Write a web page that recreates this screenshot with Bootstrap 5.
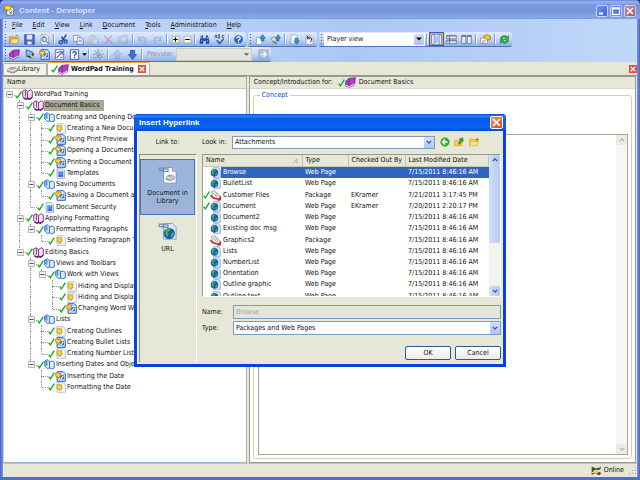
<!DOCTYPE html>
<html lang="en">
<head>
<meta charset="utf-8">
<meta name="viewport" content="width=device-width, initial-scale=1">
<title>Content - Developer</title>
<link rel="stylesheet" href="https://cdn.jsdelivr.net/npm/bootstrap@5.3.0/dist/css/bootstrap.min.css">
<style>
:root{--face:#e7e7d8;--line:#a5a693;--edge:#7f9db9}
html,body{height:100%}
body{font:7px/11px "DejaVu Sans Condensed","DejaVu Sans",sans-serif;color:#111;background:#12399a;overflow:hidden}
button,select,input,fieldset,legend{font:inherit;line-height:11px;color:inherit}
button{background:none;border:0;padding:0}
svg{display:block;flex:none}
.ic{width:11px;height:11px}
.frame{height:100vh;background:linear-gradient(90deg,#4a62cc,#7c96e4 3px,#7c96e4 calc(100% - 3px),#4a62cc);border-radius:5px 5px 0 0;padding:0 3px 3px;position:relative;box-shadow:inset 0 -3px 0 #4a6fcc}
.titlebar{height:19px;margin:0 -3px;padding:2px 4px 0;border-radius:5px 5px 0 0;background:linear-gradient(#6c88d6,#94b2f0 2px,#7a94dd 5px,#7a96de 12px,#86a8e8 17px,#7a98dc)}
.caption-text{font:700 8px/11px "Liberation Sans",sans-serif;color:#dbe5fb}
.winbtn{width:12px;height:12px;border:1px solid #c3d2f5;border-radius:2px;background:linear-gradient(135deg,#6f93f0,#3a62dc);margin-left:2px}
.winbtn.shut{background:linear-gradient(135deg,#cf8c94,#a65468)}
.bars{background:linear-gradient(90deg,#c9d9f8,#abc8f5 55%,#b3cbf7 70%,#bfd8f8)}
.menus{height:13px}
.menus a{color:#111;text-decoration:none;padding:0 5px;line-height:12px}
.menus .grip{margin-right:0}
.toolrow{gap:2px}
.grip{width:3px;flex:none;margin:2px 1px;background:repeating-linear-gradient(#3c5c9c 0 1px,transparent 1px 3px) 1px 0/1px 100% no-repeat}
.band{height:15px;border-radius:2px;background:linear-gradient(#dfeafc,#c5d8f7 50%,#8db0e8);border-bottom:1px solid #4b74b8;align-items:center}
.band .grip{align-self:stretch}
.tool{width:15px;height:14px;display:flex;align-items:center;justify-content:center;flex:none}
.tool.slim{width:12px}
.tool.lit{background:#f7a55c;border:1px solid #3a5cae}
.tool.off{opacity:.4}
.rule{width:4px;flex:none;align-self:stretch;margin:2px 0;background:linear-gradient(#7f9fd6,#7f9fd6) 1px 0/1px 100% no-repeat,linear-gradient(#f0f6ff,#f0f6ff) 2px 0/1px 100% no-repeat}
.pvlabel{color:#8c94a4;padding:0 3px}
.combo{display:flex;align-items:stretch;background:#fff;border:1px solid var(--edge);height:13px}
.combo.tall{height:14px}
.combo select{appearance:none;border:0;background:transparent;padding:0 2px;flex:1;min-width:0;outline:0}
.drop{width:10px;display:flex;align-items:center;justify-content:center;background:linear-gradient(#d3e0fd,#adc3f7);border-radius:1px}
.combo.player{width:101px;border-color:#fff;height:13px}
.combo.quiet{width:76px;background:#e3e5dc;border-color:#c9cdb9}
.combo.quiet .drop{background:none}
.tabs{height:14px;background:var(--face);border-bottom:1px solid #8d9a9a;align-items:flex-end}
.sheet{height:12px;padding:0 6px 0 3px;background:#f3f3ec;border:1px solid #b4b4a4;border-bottom:0;border-radius:2px 2px 0 0}
.sheet.on{height:13px;background:#fff;border-top:1px solid #ef9a32;font-weight:700;padding:0 3px}
.sheet.on .kind{margin-right:2px}
.redx{width:8px;height:8px;background:#e2512c;display:flex;align-items:center;justify-content:center}
.tabs>.redx{margin-bottom:2px}
.work{background:var(--face);min-height:0;padding-right:1px}
.outline{flex:0 0 38.5%;background:#fff;border:1px solid #9ab0c4;border-top-color:#9a9b8c;border-left-color:#c8d0dc;min-width:0;overflow:hidden}
.colhead{height:12px;background:var(--face);border-bottom:1px solid #c9c7b8;padding-left:3px}
.tree{display:grid;grid-auto-rows:1fr;height:304px;list-style:none;margin:0;padding:0}
.node{display:flex;align-items:center;white-space:nowrap;min-height:0}
.guide{width:11px;align-self:stretch;flex:none;display:grid;grid-template:1fr 1fr/5px 6px}
.up,.down{border-right:1px dotted #999}
.down{grid-row:2;grid-column:1}
.up{grid-row:1;grid-column:1}
.arm{grid-row:2;grid-column:2;border-top:1px dotted #999}
.guide svg{grid-area:1/1/3/3;place-self:center;width:7px;height:7px}
.tick{width:7px;height:8px;flex:none}
.kind{width:11px;height:11px}
.node .name{padding:0 4px 0 1px}
.node.sel .name{background:#a9a894}
.detail{background:#fff;border:1px solid #9a9b8c;min-width:0;margin-left:2px}
.detail .strip{height:12px;background:var(--face);padding-left:4px;border-bottom:1px solid #d8d8c8}
.strip .tick{margin-left:5px}
.strip .kind{margin-right:3px}
.group{border:1px solid #d0d0bf;border-radius:3px;margin:1px 3px 3px;padding:0 3px 3px 4px;min-height:0;flex:1;display:flex;flex-direction:column;min-width:0}
.group legend{float:none;width:auto;color:#1048d0;margin:0 0 0 2px;padding:0 2px;line-height:10px}
.notes{flex:1;border:1px solid var(--line);margin-top:34px;display:flex;min-height:0}
.notes textarea{flex:1;border:0;resize:none;outline:0;min-width:0}
.pale{width:11px;background:#f6f6f4}
.knob{height:10px;display:flex;align-items:center;justify-content:center;background:linear-gradient(90deg,#d3e0fd,#adc3f7);border-radius:2px}
.pale .knob{background:#ebebe2}
.status{height:14px;background:var(--face);border-top:1px solid #c4c4b4}
.status svg:first-child{margin-right:2px}
/* dialog window */
.dlg{position:absolute;left:134px;top:114px;width:372px;background:var(--face);border:solid #0a3fe0;border-width:0 3px 3px;border-radius:4px 4px 0 0;box-shadow:inset 1px 0 0 #fff}
.dlg-title{height:17px;margin:0 -3px;padding:0 3px 0 5px;border-radius:4px 4px 0 0;background:linear-gradient(#0a3fd0,#2c86fb 2px,#0458ea 5px,#0564f8 13px,#0448d0);color:#fff}
.dlg-title .caption-text{color:#fff}
.dlg-title .shut{width:13px;height:13px;border:1px solid #fff;border-radius:2px;background:linear-gradient(135deg,#f0957c,#d8401c);display:flex;align-items:center;justify-content:center}
.lookrow{height:22px}
.linkto{width:61px;text-align:center}
.lookrow label{width:34px;padding-left:4px}
.lookrow .combo{width:203px}
.side{width:58px;border:1px solid #8e8d7c;border-right-color:#fff;border-bottom:0;margin:1px 0 2px 2px;padding:4px 1px 0 0}
.place{display:flex;flex-direction:column;align-items:center;justify-content:flex-start;width:100%;line-height:8px;border:1px solid transparent;text-align:center;padding-top:5px}
.place.on{background:#9db4da;border-color:#4a72b8;height:56px}
.place svg{width:20px;height:20px;margin-bottom:4px}
.pane{flex:1;min-width:0;padding:1px 2px 0 5px}
.listbox{height:143px;border:1px solid #8e9a94;border-right-color:#fff;border-bottom-color:#fff;background:#fff;display:flex;overflow:hidden}
.files{height:147px;table-layout:fixed;width:100%;border-collapse:collapse;margin:0;white-space:nowrap}
.c-name{width:99px}.c-type{width:46px}.c-by{width:57px}
.files th{font-weight:400;background:var(--face);padding:0 3px;height:11px;border-right:1px solid #c6c5b5;border-bottom:1px solid #c9c7b8}
.files td{padding:0 3px;overflow:hidden}
.files td:first-child{padding:0}
.files tr.sel td+td,.files tr.sel .name{background:#3066c0;color:#fff}
.files .name{flex:1;padding-left:2px}
.track{width:11px;background:#f3f3ef;flex:none}
.thumb{height:78px;background:linear-gradient(90deg,#d0dffc,#b3c9f8);border-radius:2px}
.fieldrow{display:grid;grid-template-columns:31px 1fr;align-items:center;margin-top:2px}
.listbox+.fieldrow{margin-top:8px}
.fieldrow input{border:1px solid var(--edge);background:#e5e6d9;color:#a5a593;height:14px;padding:0 2px;min-width:0;border-radius:0}
.actions{margin:11px 0 4px;gap:4px}
.push{width:46px;height:14px;border:1px solid #2c5a92;border-radius:2px;background:linear-gradient(#fff,#ecebe3)}
</style>
<script src="https://cdn.jsdelivr.net/npm/bootstrap@5.3.0/dist/js/bootstrap.bundle.min.js"></script>
</head>
<body>
<svg width="0" height="0" class="position-absolute" aria-hidden="true">
<symbol id="tick" viewBox="0 0 12 14"><path d="M1 8l3 4L11 1" fill="none" stroke="#12b01c" stroke-width="2.4"/></symbol>
<symbol id="pbook" viewBox="0 0 16 16"><path d="M1 3l4-2 3 3 4-3 3 2v9l-4 2-3-1-3 1-4-3z" fill="#f6e4f6" stroke="#8a2a8a" stroke-width="1.4"/><path d="M8 4v9M5 2v9" stroke="#8a2a8a" stroke-width="1.4"/><path d="M2 13l4 2 2-1 3 1 4-3" fill="none" stroke="#5a105a" stroke-width="1.6"/></symbol>
<symbol id="bbook" viewBox="0 0 16 16"><path d="M1 3l4-2 3 3 4-1 3 2v8l-4 1-3-1-3 1-4-4z" fill="#dcecfc" stroke="#2c6ad0" stroke-width="1.4"/><path d="M8 4v9" stroke="#2c6ad0" stroke-width="1.4"/><path d="M2 3l3-1v8l-3-1z" fill="#4a90e8"/></symbol>
<symbol id="vbook" viewBox="0 0 16 16"><path d="M1 6l5-4 9-1-1 10-8 4-5-2z" fill="#b040c8" stroke="#5a1470"/><path d="M1 12l5 2 8-4" fill="none" stroke="#fff" stroke-width="1.3"/><path d="M6 2v11" stroke="#6c1888"/></symbol>
<symbol id="qpage" viewBox="0 0 16 16"><path d="M3 1h9l3 3v11H3z" fill="#f4f8ff" stroke="#8ca4d0"/><path d="M3 4h7v6H8l-1 3-2-3H3z" fill="#ffd23a" stroke="#b88410"/></symbol>
<symbol id="bqpage" viewBox="0 0 16 16"><path d="M3 1h9l3 3v11H3z" fill="#cfe0fb" stroke="#2858c0" stroke-width="1.4"/><path d="M7 6h6v6H7z" fill="#3a6ad8"/><path d="M8 12l4-5" stroke="#fff" stroke-width="1.5"/><path d="M1 3h7v5H6l-1 3-2-3H1z" fill="#ffd23a" stroke="#a87810"/></symbol>
<symbol id="dpage" viewBox="0 0 16 16"><path d="M3 1h8l3 3v11H3z" fill="#eaf1ff" stroke="#6f8cc8"/><path d="M5 5h7v8H5z" fill="#3a66e0"/><path d="M6 7h5M6 9h5" stroke="#a8c0f8"/></symbol>
<symbol id="web" viewBox="0 0 16 16"><path d="M5 1h8l2 3v11H5z" fill="#d6e6fb" stroke="#7a98c8"/><circle cx="6.500" cy="8.500" r="5.500" fill="#1c56b8"/><path d="M2 7c1-3 3-4 5-3l1 2-3 1 1 3-2 2zM8 9l3-1-1 4-2 1z" fill="#3cb04a"/></symbol>
<symbol id="pkg" viewBox="0 0 16 16"><path d="M2 2l5-1 8 8-3 4-8-3z" fill="#f2f2f2" stroke="#888"/><path d="M4 4l6 6M7 3l5 6" stroke="#888"/><path d="M1 7c1 4 5 6 13 6M15 9v5l-4 1" fill="none" stroke="#e02020" stroke-width="2.200"/></symbol>
<symbol id="exp" viewBox="0 0 9 9"><rect x=".5" y=".5" width="8" height="8" rx="1" fill="#f4f4ee" stroke="#8c98a8"/><path d="M2 4.500h5" stroke="#222"/></symbol>
<symbol id="cx" viewBox="0 0 8 8"><path d="M1 1l6 6M7 1L1 7" stroke="#fff" stroke-width="1.700"/></symbol>
<symbol id="chev" viewBox="0 0 8 8"><path d="M1 2.500l3 3 3-3" fill="none" stroke="#3c5690" stroke-width="1.800"/></symbol>
<symbol id="chevup" viewBox="0 0 8 8"><path d="M1 5.500l3-3 3 3" fill="none" stroke="#3c5690" stroke-width="1.800"/></symbol>
<symbol id="gchev" viewBox="0 0 8 8"><path d="M1 2.500l3 3 3-3" fill="none" stroke="#b4b4a8" stroke-width="1.800"/></symbol>
<symbol id="gchevup" viewBox="0 0 8 8"><path d="M1 5.500l3-3 3 3" fill="none" stroke="#b4b4a8" stroke-width="1.800"/></symbol>
<symbol id="tri" viewBox="0 0 8 8"><path d="M0 2h8L4 6z"/></symbol>
<symbol id="app" viewBox="0 0 16 16"><path d="M4 3h10v12H4z" fill="#f4f4f4" stroke="#555"/><path d="M1 1h9v6H6L4 9V7H1z" fill="#ffd83a" stroke="#8a7410"/><path d="M7 9l5 4M12 8l-4 6" stroke="#444"/></symbol>
<symbol id="open" viewBox="0 0 16 16"><path d="M1 4h5l1 1h5v3H4l-3 6z" fill="#f0c040" stroke="#a87818"/><path d="M4 7h11l-3 7H1z" fill="#ffdf7a" stroke="#b88820"/><path d="M9 3c2-2 4-1 5 1" stroke="#555" fill="none"/></symbol>
<symbol id="save" viewBox="0 0 16 16"><path d="M1 1h14v14H1z" fill="#4a68c8" stroke="#2c4494"/><path d="M4 1h8v7H4z" fill="#dfe8fb"/><path d="M5 11h6v4H5z" fill="#f4f4f4"/></symbol>
<symbol id="prev" viewBox="0 0 16 16"><path d="M3 1h8l3 3v11H3z" fill="#f6f8fc" stroke="#8090ac"/><circle cx="8" cy="8" r="3.500" fill="#bcd4f0" stroke="#607090" stroke-width="1.300"/><path d="M11 11l3 3M5 4h4" stroke="#607090" stroke-width="1.500"/></symbol>
<symbol id="cut" viewBox="0 0 16 16"><path d="M12 1L6 10M10 10L5 4" stroke="#24408c" stroke-width="2"/><circle cx="4" cy="12" r="2.300" fill="none" stroke="#2850b8" stroke-width="2"/><circle cx="11" cy="11" r="2.300" fill="none" stroke="#2850b8" stroke-width="2"/></symbol>
<symbol id="copy" viewBox="0 0 16 16"><path d="M1 2h7l2 2v7H1z" fill="#fff" stroke="#4a6cb8"/><path d="M6 5h6l3 3v7H6z" fill="#e6eefc" stroke="#4a6cb8"/><path d="M8 9h5M8 11h5" stroke="#6c8cd0"/></symbol>
<symbol id="paste" viewBox="0 0 16 16"><path d="M2 3h9v11H2z" fill="#c8c8c0" stroke="#888"/><path d="M5 1h3v3H5z" fill="#999"/><path d="M7 7h7v8H7z" fill="#eee" stroke="#888"/></symbol>
<symbol id="del" viewBox="0 0 16 16"><path d="M2 3l12 11M13 2L3 14" stroke="#c04878" stroke-width="1.800"/></symbol>
<symbol id="cam" viewBox="0 0 16 16"><path d="M1 4h4l1-2h8v11H1z" fill="#b4c8e8" stroke="#607cb0"/><circle cx="8" cy="8" r="3.500" fill="#e8f0fb" stroke="#607cb0"/></symbol>
<symbol id="undo" viewBox="0 0 16 16"><path d="M3 3v6h6M3 8c3-5 10-4 10 1 0 2-1 3-3 4" fill="none" stroke="#6080c0" stroke-width="1.800"/></symbol>
<symbol id="redo" viewBox="0 0 16 16"><path d="M13 3v6H7M13 8C10 3 3 4 3 9c0 2 1 3 3 4" fill="none" stroke="#6080c0" stroke-width="1.800"/></symbol>
<symbol id="plus" viewBox="0 0 16 16"><path d="M2 2h12v12H2z" fill="#fffef4" stroke="#888870"/><path d="M8 4v8M4 8h8" stroke="#000" stroke-width="2"/></symbol>
<symbol id="minus" viewBox="0 0 16 16"><path d="M2 2h12v12H2z" fill="#fffef4" stroke="#888870"/><path d="M4 8h8" stroke="#000" stroke-width="2"/></symbol>
<symbol id="find" viewBox="0 0 16 16"><path d="M3 2h3v4h4V2h3l2 8v4h-5v-4H6v4H1v-4z" fill="#24489c"/><path d="M3 10h2M11 10h2M4 4v3M12 4v3" stroke="#a8c4f4" stroke-width="1.300"/></symbol>
<symbol id="abc" viewBox="0 0 16 16"><path d="M1 6l2-5 1 5M6 1v5h2V1H6M15 2h-3v3h3" fill="none" stroke="#444" stroke-width="1.100"/><path d="M4 9l4 5 6-7" fill="none" stroke="#2858c8" stroke-width="2.200"/></symbol>
<symbol id="help" viewBox="0 0 16 16"><circle cx="8" cy="8" r="7" fill="#2c64d0" stroke="#f0f6ff"/><path d="M5.500 6c0-3 5-3 5 0 0 2-2.500 1.500-2.500 4M8 11v2" fill="none" stroke="#fff" stroke-width="1.800"/></symbol>
<symbol id="upload" viewBox="0 0 16 16"><path d="M2 5h8v10H2z" fill="#fff" stroke="#8898b0"/><path d="M11 1l4 5h-2v4H9V6H7z" fill="#28a0c8" stroke="#186888"/></symbol>
<symbol id="upload2" viewBox="0 0 16 16"><path d="M1 6l6-2 3 5-5 3z" fill="#ddd" stroke="#777"/><path d="M4 11l6 3" stroke="#777" stroke-width="2"/><path d="M12 1l3 5h-2v4h-3V6H8z" fill="#28a0c8" stroke="#186888"/></symbol>
<symbol id="download" viewBox="0 0 16 16"><path d="M3 1h6l3 3v10H3z" fill="#fff" stroke="#8898b0"/><path d="M11 15l4-5h-2V6H9v4H7z" fill="#28a0c8" stroke="#186888"/></symbol>
<symbol id="undochk" viewBox="0 0 16 16"><path d="M3 2h7l3 3v10H3z" fill="#fff" stroke="#8898b0"/><path d="M5 6c3-3 7-1 6 3l-2 3M5 3v4h4" fill="none" stroke="#444" stroke-width="1.500"/></symbol>
<symbol id="v1" viewBox="0 0 16 16"><path d="M1 1h14v14H1z" fill="#fff" stroke="#4468b8"/><path d="M5 3h6v10H5z" fill="#a8c4f4"/><path d="M4.500 1v14M12 1v14" stroke="#4468b8"/></symbol>
<symbol id="v2" viewBox="0 0 16 16"><path d="M1 2h14v5H1zM1 9h14v5H1z" fill="#e6ecf4" stroke="#50607c"/><path d="M1 3h14M1 10h14M5 3v11" stroke="#50607c"/></symbol>
<symbol id="v3" viewBox="0 0 16 16"><path d="M1 2h6v12H1zM9 2h6v12H9z" fill="#e6ecf4" stroke="#50607c"/><path d="M1 3h6M9 3h6" stroke="#50607c" stroke-width="2"/></symbol>
<symbol id="props" viewBox="0 0 16 16"><path d="M1 6h10v8H1z" fill="#fff" stroke="#777"/><path d="M5 3l5-2 5 2v5l-5 1-3-3z" fill="#f4c440" stroke="#8a6a10"/><path d="M3 10h6M3 12h4" stroke="#777"/></symbol>
<symbol id="refresh" viewBox="0 0 16 16"><path d="M2 7c1-5 7-6 10-3l2-2v6H8l2-2C8 4 5 5 5 7zM14 9c-1 5-7 6-10 3l-2 2V8h6l-2 2c2 2 5 1 5-1z" fill="#34b830" stroke="#147018" stroke-width=".7"/></symbol>
<symbol id="topic" viewBox="0 0 16 16"><path d="M3 1l9 3v8l-9-3z" fill="#8cb4ec" stroke="#244c98"/><path d="M2 10l10 4 3-7-3-2v5z" fill="#283c70"/><path d="M8 9l6 1-2 4z" fill="#f4cc40"/></symbol>
<symbol id="linkpg" viewBox="0 0 16 16"><path d="M2 1h12v14H2z" fill="#fff" stroke="#607090" stroke-width="1.300"/><path d="M4 13l7-8M7 4h5v5M4 5h3M9 12h3" fill="none" stroke="#3c58a0" stroke-width="1.500"/></symbol>
<symbol id="qbox" viewBox="0 0 16 16"><path d="M2 1h12v14H2z" fill="#fff" stroke="#3c5090" stroke-width="1.300"/><path d="M5.500 6c0-3 5-3 5 0 0 2-2.500 1.500-2.500 4M8 11v2" fill="none" stroke="#28409c" stroke-width="1.800"/></symbol>
<symbol id="unlink" viewBox="0 0 16 16"><path d="M4 7l3-3 3 3-3 3zM7 11l3-3 3 3-3 3z" fill="none" stroke="#8a94a4" stroke-width="1.500"/><path d="M8 0v3M2 2l2 2M13 2l-2 2M0 8h3M13 7h3M3 13l2-1" stroke="#6a7484"/></symbol>
<symbol id="aup" viewBox="0 0 16 16"><path d="M8 1l6 7h-3v6H5V8H2z" fill="#8cb0ec" stroke="#4870c0"/></symbol>
<symbol id="adown" viewBox="0 0 16 16"><path d="M8 15l6-7h-3V2H5v6H2z" fill="#3474dc" stroke="#1c449c"/></symbol>
<symbol id="go" viewBox="0 0 16 16"><path d="M1 1h14v14H1z" fill="#a4b4c8" stroke="#8898b0"/><path d="M4 8h8M8 4l4 4-4 4" fill="none" stroke="#fff" stroke-width="2"/></symbol>
<symbol id="lib" viewBox="0 0 16 16"><path d="M1 8l5-3 9 1v4l-6 3-8-2z" fill="#bbb" stroke="#666"/><path d="M1 8l8 2 6-4" fill="none" stroke="#f4f4f4" stroke-width="1.400"/></symbol>
<symbol id="gplus" viewBox="0 0 16 16"><circle cx="8" cy="8" r="7" fill="#34a830" stroke="#5cb858"/><path d="M12 8H5M8 4L4 8l4 4" fill="none" stroke="#fff" stroke-width="2.200"/></symbol>
<symbol id="fup" viewBox="0 0 16 16"><path d="M1 5h5l1 1h6v8H1z" fill="#f8d050" stroke="#d0a030"/><path d="M8 3l6-2 1 6-2-1-4 6-2-1 3-7z" fill="#38a030" stroke="#1c6818" stroke-width=".6"/></symbol>
<symbol id="fnew" viewBox="0 0 16 16"><path d="M1 3h5l1 1h6v9H1z" fill="#f8c850" stroke="#e0a030"/><path d="M3 7h12l-3 7H1z" fill="#ffe48c" stroke="#e0a030"/><path d="M13 1v6M10 4h6" stroke="#f06820" stroke-width="1.800"/></symbol>
<symbol id="doclib" viewBox="0 0 32 32"><path d="M9 4h14l6 6v19H9z" fill="#f4f7ff" stroke="#6078b0"/><path d="M23 4v6h6" fill="#b8c8e8" stroke="#6078b0"/><path d="M2 5h7v4H2zM8 6h8v4H8z" fill="none" stroke="#788cb4" stroke-width="2"/><path d="M13 19l5-3 8 2v4l-6 3-7-2z" fill="#b8b8c0" stroke="#707080"/><path d="M13 19l7 3 6-4" fill="none" stroke="#fff"/></symbol>
<symbol id="urldoc" viewBox="0 0 32 32"><path d="M9 4h14l6 6v19H9z" fill="#dce8fb" stroke="#6078b0"/><path d="M2 5h7v4H2zM8 6h8v4H8z" fill="none" stroke="#788cb4" stroke-width="2"/><circle cx="18" cy="20" r="9" fill="#1c58b8"/><path d="M11 18c1-5 4-7 8-6l1 4-5 1 2 5-3 4zM21 20l5-2-1 6-4 3z" fill="#44b44c"/></symbol>
<symbol id="online" viewBox="0 0 16 16"><path d="M1 2l6 3 7-3v4l-5 2 6 4-3 3-6-3-5 2z" fill="#444"/><path d="M3 8l6-2 3 4-5 3z" fill="#f4d440"/><path d="M1 11l5-1M9 3h4" stroke="#ddd" stroke-width="2"/></symbol>
</svg>

<div class="frame d-flex flex-column">
  <header class="titlebar d-flex align-items-center">
    <svg class="ic me-1"><use href="#app"/></svg><span class="caption-text flex-grow-1">Content - Developer</span>
    <button class="winbtn" aria-label="Minimize"><svg viewBox="0 0 10 10" width="10" height="10"><path d="M2 7.500h4" stroke="#fff" stroke-width="2"/></svg></button>
    <button class="winbtn" aria-label="Maximize"><svg viewBox="0 0 10 10" width="10" height="10"><path d="M1.500 2.500h7v6h-7zM1 2h8" fill="none" stroke="#fff" stroke-width="1.300"/></svg></button>
    <button class="winbtn shut" aria-label="Close"><svg viewBox="0 0 10 10" width="10" height="10"><path d="M2 2l6 6M8 2l-6 6" stroke="#fff" stroke-width="1.600"/></svg></button>
  </header>

  <div class="bars">
    <nav class="menus d-flex"><i class="grip"></i>
      <a href="#"><u>F</u>ile</a><a href="#"><u>E</u>dit</a><a href="#"><u>V</u>iew</a><a href="#"><u>L</u>ink</a><a href="#"><u>D</u>ocument</a><a href="#"><u>T</u>ools</a><a href="#"><u>A</u>dministration</a><a href="#"><u>H</u>elp</a>
    </nav>
    <div class="toolrow d-flex">
      <div class="band d-flex"><i class="grip me-0"></i>
        <button class="tool" aria-label="Open"><svg class="ic"><use href="#open"/></svg></button><button class="tool" aria-label="Save"><svg class="ic"><use href="#save"/></svg></button><button class="tool" aria-label="Print preview"><svg class="ic"><use href="#prev"/></svg></button><i class="rule"></i><button class="tool" aria-label="Cut"><svg class="ic"><use href="#cut"/></svg></button><button class="tool" aria-label="Copy"><svg class="ic"><use href="#copy"/></svg></button><button class="tool off" aria-label="Paste"><svg class="ic"><use href="#paste"/></svg></button><button class="tool off" aria-label="Delete"><svg class="ic"><use href="#del"/></svg></button><button class="tool off" aria-label="Capture"><svg class="ic"><use href="#cam"/></svg></button><i class="rule"></i><button class="tool off" aria-label="Undo"><svg class="ic"><use href="#undo"/></svg></button><button class="tool off" aria-label="Redo"><svg class="ic"><use href="#redo"/></svg></button><i class="rule"></i><button class="tool slim" aria-label="Expand"><svg width="9" height="9"><use href="#plus"/></svg></button><button class="tool slim" aria-label="Collapse"><svg width="9" height="9"><use href="#minus"/></svg></button><i class="rule"></i><button class="tool" aria-label="Find"><svg class="ic"><use href="#find"/></svg></button><button class="tool" aria-label="Spelling"><svg class="ic"><use href="#abc"/></svg></button><i class="rule"></i><button class="tool" aria-label="Help"><svg class="ic"><use href="#help"/></svg></button>
      </div>
      <div class="band d-flex"><i class="grip"></i>
        <button class="tool" aria-label="Check in"><svg class="ic"><use href="#upload"/></svg></button><button class="tool" aria-label="Check in all"><svg class="ic"><use href="#upload2"/></svg></button><i class="rule"></i><button class="tool" aria-label="Check out"><svg class="ic"><use href="#download"/></svg></button><button class="tool" aria-label="Undo check out"><svg class="ic"><use href="#undochk"/></svg></button>
      </div>
      <div class="band d-flex"><i class="grip"></i>
        <div class="combo player"><select aria-label="View"><option>Player view</option></select><span class="drop"><svg width="6" height="6"><use href="#tri"/></svg></span></div>
        <i class="rule"></i><button class="tool lit" aria-label="Details view"><svg width="11" height="11"><use href="#v1"/></svg></button><button class="tool" aria-label="Split rows"><svg width="11" height="11"><use href="#v2"/></svg></button><button class="tool" aria-label="Split columns"><svg width="11" height="11"><use href="#v3"/></svg></button><i class="rule"></i><button class="tool" aria-label="Properties"><svg class="ic"><use href="#props"/></svg></button><i class="rule"></i><button class="tool" aria-label="Refresh"><svg class="ic"><use href="#refresh"/></svg></button>
      </div>
    </div>
    <div class="toolrow d-flex">
      <div class="band d-flex"><i class="grip me-0"></i>
        <button class="tool" aria-label="New section"><svg class="ic"><use href="#vbook"/></svg></button><button class="tool" aria-label="New topic"><svg class="ic"><use href="#topic"/></svg></button><button class="tool" aria-label="New question"><svg class="ic"><use href="#bqpage"/></svg></button><button class="tool" aria-label="New link"><svg class="ic"><use href="#linkpg"/></svg></button><button class="tool" aria-label="New assessment"><svg class="ic"><use href="#qbox"/></svg></button><svg width="5" height="5"><use href="#tri"/></svg><i class="rule"></i><button class="tool" aria-label="Unlink"><svg class="ic"><use href="#unlink"/></svg></button><i class="rule"></i><button class="tool off" aria-label="Move up"><svg class="ic"><use href="#aup"/></svg></button><button class="tool" aria-label="Move down"><svg class="ic"><use href="#adown"/></svg></button><i class="rule"></i><label for="pv" class="pvlabel">Preview:</label><div class="combo quiet"><select id="pv" disabled></select><span class="drop"><svg width="5" height="5" opacity=".6"><use href="#tri"/></svg></span></div><button class="tool ms-1" aria-label="Go"><svg class="ic" opacity=".7"><use href="#go"/></svg></button>
      </div>
    </div>
  </div>

  <div class="tabs d-flex">
    <button class="sheet d-flex align-items-center"><svg class="ic"><use href="#lib"/></svg>Library</button>
    <button class="sheet on d-flex align-items-center"><svg class="tick"><use href="#tick"/></svg><svg class="kind"><use href="#vbook"/></svg>WordPad Training<span class="redx ms-1"><svg width="6" height="6"><use href="#cx"/></svg></span></button>
    <button class="redx ms-auto" aria-label="Close tab"><svg width="6" height="6"><use href="#cx"/></svg></button>
  </div>

  <main class="work d-flex flex-grow-1">
    <section class="outline">
      <div class="colhead">Name</div>
      <ul class="tree" id="tree"></ul>
    </section>
    <section class="detail flex-grow-1 d-flex flex-column">
      <div class="strip d-flex align-items-center">Concept/Introduction for:<svg class="tick"><use href="#tick"/></svg><svg class="kind"><use href="#vbook"/></svg>Document Basics</div>
      <fieldset class="group"><legend>Concept</legend>
        <div class="notes"><textarea aria-label="Concept"></textarea>
          <div class="pale d-flex flex-column justify-content-between"><span class="knob"><svg width="6" height="6"><use href="#gchevup"/></svg></span><span class="knob"><svg width="6" height="6"><use href="#gchev"/></svg></span></div></div>
      </fieldset>
    </section>
  </main>
  <footer class="status d-flex align-items-center justify-content-end"><svg width="11" height="11"><use href="#online"/></svg>Online<svg width="9" height="9" class="ms-1"><path d="M7 1h1v1H7zM4 4h1v1H4zM7 4h1v1H7zM1 7h1v1H1zM4 7h1v1H4zM7 7h1v1H7z" fill="#a0a08c"/></svg></footer>

  <section class="dlg" role="dialog" aria-labelledby="dt">
    <div class="dlg-title d-flex align-items-center justify-content-between"><span id="dt" class="caption-text">Insert Hyperlink</span><button class="shut" aria-label="Close"><svg width="9" height="9"><use href="#cx"/></svg></button></div>
    <div class="lookrow d-flex align-items-center"><span class="linkto">Link to:</span><label for="look">Look in:</label>
      <div class="combo"><select id="look"><option>Attachments</option></select><span class="drop"><svg width="6" height="6"><use href="#chev"/></svg></span></div>
      <button class="tool slim ms-1" aria-label="Back"><svg width="10" height="10"><use href="#gplus"/></svg></button><button class="tool" aria-label="Up"><svg width="10" height="10"><use href="#fup"/></svg></button><button class="tool" aria-label="New folder"><svg width="10" height="10"><use href="#fnew"/></svg></button></div>
    <div class="d-flex">
      <div class="side">
        <button class="place on"><svg><use href="#doclib"/></svg>Document in<br>Library</button>
        <button class="place"><svg><use href="#urldoc"/></svg>URL</button>
      </div>
      <div class="pane">
        <div class="listbox">
          <div class="flex-grow-1 overflow-hidden">
          <table class="files"><colgroup><col class="c-name"><col class="c-type"><col class="c-by"><col></colgroup>
            <thead><tr><th><span class="d-flex align-items-center justify-content-between">Name<svg width="6" height="6" viewBox="0 0 8 8"><path d="M1 7l4-6v6" fill="none" stroke="#a0a090"/></svg></span></th><th>Type</th><th>Checked Out By</th><th>Last Modified Date</th></tr></thead>
            <tbody id="files"></tbody></table></div>
          <div class="track d-flex flex-column"><span class="knob"><svg width="6" height="6"><use href="#chevup"/></svg></span><span class="thumb"></span><span class="knob mt-auto"><svg width="6" height="6"><use href="#chev"/></svg></span></div>
        </div>
        <div class="fieldrow"><label for="nm">Name:</label><input id="nm" value="Browse" disabled></div>
        <div class="fieldrow"><label for="ty">Type:</label><div class="combo tall"><select id="ty"><option>Packages and Web Pages</option></select><span class="drop"><svg width="6" height="6"><use href="#chev"/></svg></span></div></div>
        <div class="actions d-flex justify-content-end"><button class="push">OK</button><button class="push">Cancel</button></div>
      </div>
    </div>
  </section>
</div>
<script>
const use = (id, cls) => `<svg class="${cls}"><use href="#${id}"/></svg>`;
const nodes = [
  [0,'pbook','WordPad Training'],[1,'pbook','Document Basics'],
  [2,'bbook','Creating and Opening Documents'],[3,'qpage','Creating a New Document'],[3,'bqpage','Using Print Preview'],
  [3,'bqpage','Opening a Document'],[3,'bqpage','Printing a Document'],[3,'dpage','Templates'],
  [2,'bbook','Saving Documents'],[3,'bqpage','Saving a Document as'],[2,'dpage','Document Security'],
  [1,'pbook','Applying Formatting'],[2,'bbook','Formatting Paragraphs'],[3,'qpage','Selecting Paragraph Text'],
  [1,'pbook','Editing Basics'],[2,'bbook','Views and Toolbars'],[3,'bbook','Work with Views'],
  [4,'qpage','Hiding and Displaying'],[4,'qpage','Hiding and Displaying'],[4,'bqpage','Changing Word Window'],
  [2,'bbook','Lists'],[3,'qpage','Creating Outlines'],[3,'bqpage','Creating Bullet Lists'],[3,'qpage','Creating Number Lists'],
  [2,'bbook','Inserting Dates and Objects'],[3,'bqpage','Inserting the Date'],[3,'qpage','Formatting the Date']];
// true when a later sibling exists at the given level below row i
const more = (i, level) => {
  for (let k = i + 1; k < nodes.length; k++) {
    if (nodes[k][0] < level) return false;
    if (nodes[k][0] === level) return true;
  }
  return false;
};
document.getElementById('tree').innerHTML = nodes.map(([d, icon, label], i) => {
  let g = '';
  for (let l = 0; l <= d; l++) {
    const own = l === d, on = l > 0 && more(i, l);
    const parent = own && nodes[i + 1] && nodes[i + 1][0] > d;
    g += `<span class="guide">${(own ? l > 0 : on) ? '<i class="up"></i>' : ''}${on ? '<i class="down"></i>' : ''}${own ? '<i class="arm"></i>' : ''}${parent ? use('exp', '') : ''}</span>`;
  }
  return `<li class="node${i === 1 ? ' sel' : ''}">${g}${use('tick', 'tick')}${use(icon, 'kind')}<span class="name">${label}</span></li>`;
}).join('');

const W = 'Web Page', D = '7/15/2011 8:46:16 AM';
const files = [['Browse',W,'',D],['BulletList',W,'',D],['Customer Files','Package','EKramer','7/21/2011 3:17:45 PM'],
  ['Document',W,'EKramer','7/20/2011 2:20:17 PM'],['Document2',W,'',D],['Existing doc msg',W,'',D],['Graphics2','Package','',D],
  ['Lists',W,'',D],['NumberList',W,'',D],['Orientation',W,'',D],['Outline graphic',W,'',D],['Outline text',W,'',D]];
document.getElementById('files').innerHTML = files.map(([n, t, by, at], i) =>
  `<tr class="${i ? '' : 'sel'}"><td><span class="d-flex align-items-center">${by ? use('tick', 'tick') : '<i class="tick"></i>'}${use(t === W ? 'web' : 'pkg', 'kind')}<span class="name">${n}</span></span></td><td>${t}</td><td>${by}</td><td>${at}</td></tr>`).join('');
</script>
</body>
</html>
